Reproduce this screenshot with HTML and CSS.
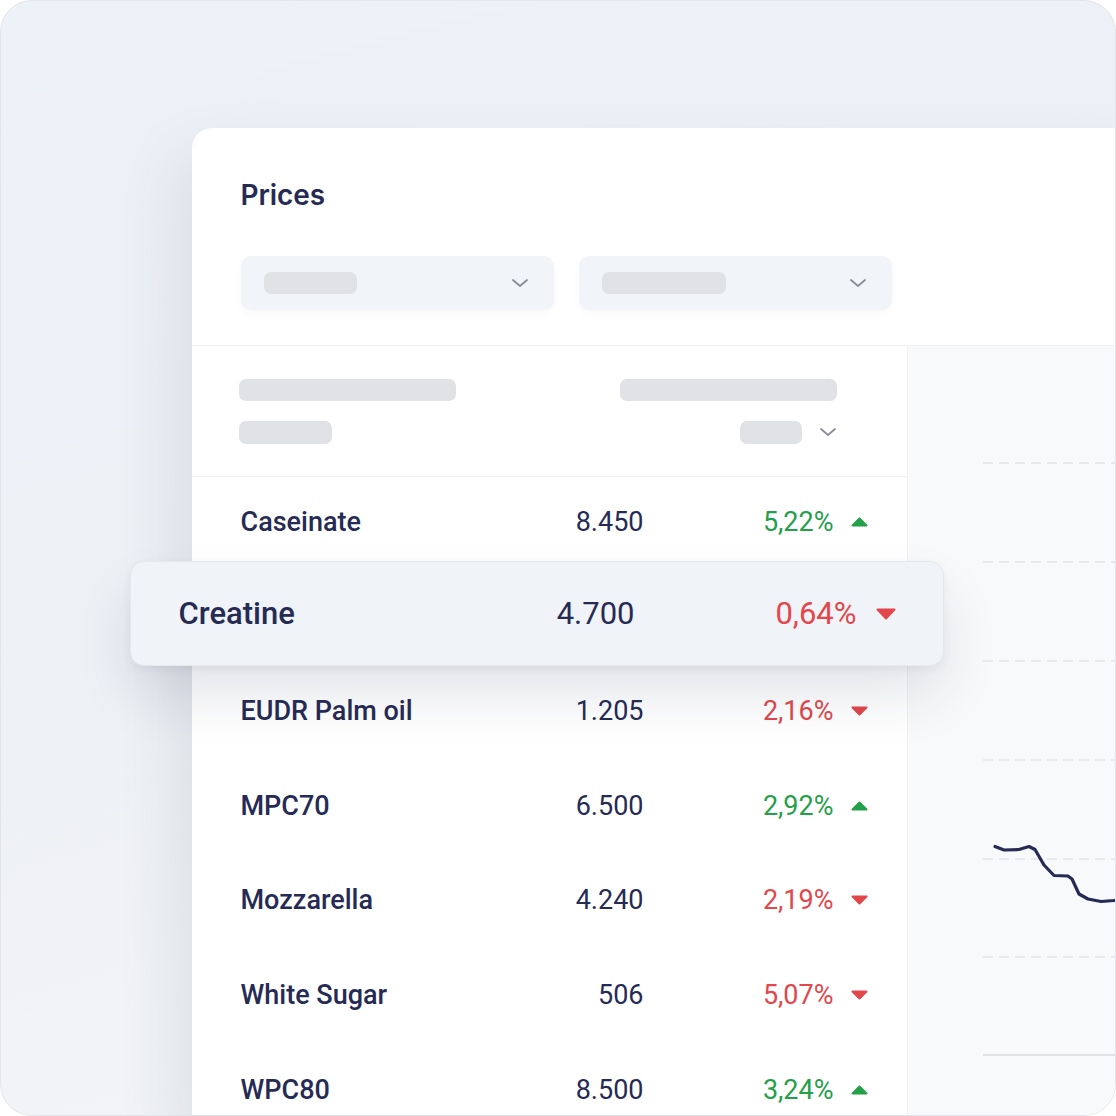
FILE: index.html
```html
<!DOCTYPE html>
<html lang="en">
<head>
    <meta charset="UTF-8">
    <meta name="viewport" content="width=device-width, initial-scale=1.0">
    <title>Prices</title>
    <link rel="stylesheet" href="styles.css">
</head>
<body>
<div class="frame">
    <div class="card">
        <div class="card-header">
            <h2 class="title">Prices</h2>
            <div class="filters">
                <div class="select">
                    <span class="skel skel-sm"></span>
                    <svg class="chevron" width="18" height="10" viewBox="0 0 18 10"><path d="M2 2 L9 8 L16 2"/></svg>
                </div>
                <div class="select">
                    <span class="skel skel-md"></span>
                    <svg class="chevron" width="18" height="10" viewBox="0 0 18 10"><path d="M2 2 L9 8 L16 2"/></svg>
                </div>
            </div>
        </div>

        <div class="card-body">
            <div class="table">
                <div class="table-head">
                    <div class="head-col">
                        <span class="skel skel-wide"></span>
                        <span class="skel skel-sm"></span>
                    </div>
                    <div class="head-col">
                        <span class="skel skel-wide"></span>
                        <div class="head-sort">
                            <span class="skel skel-xs"></span>
                            <svg class="chevron" width="18" height="10" viewBox="0 0 18 10"><path d="M2 2 L9 8 L16 2"/></svg>
                        </div>
                    </div>
                </div>

                <div class="row">
                    <span class="name">Caseinate</span>
                    <span class="price">8.450</span>
                    <span class="change up">5,22%</span>
                    <svg class="arrow" width="17" height="10" viewBox="0 0 17 10"><polygon class="up" points="8.5,1.5 15.5,8.5 1.5,8.5"/></svg>
                </div>

                <div class="row row-slot">
                    <div class="row row-active">
                        <span class="name">Creatine</span>
                        <span class="price">4.700</span>
                        <span class="change down">0,64%</span>
                        <svg class="arrow" width="20" height="12" viewBox="0 0 20 12"><polygon class="down" points="1.5,1.5 18.5,1.5 10,10.5"/></svg>
                    </div>
                </div>

                <div class="row">
                    <span class="name">EUDR Palm oil</span>
                    <span class="price">1.205</span>
                    <span class="change down">2,16%</span>
                    <svg class="arrow" width="17" height="10" viewBox="0 0 17 10"><polygon class="down" points="1.5,1.5 15.5,1.5 8.5,8.5"/></svg>
                </div>

                <div class="row">
                    <span class="name">MPC70</span>
                    <span class="price">6.500</span>
                    <span class="change up">2,92%</span>
                    <svg class="arrow" width="17" height="10" viewBox="0 0 17 10"><polygon class="up" points="8.5,1.5 15.5,8.5 1.5,8.5"/></svg>
                </div>

                <div class="row">
                    <span class="name">Mozzarella</span>
                    <span class="price">4.240</span>
                    <span class="change down">2,19%</span>
                    <svg class="arrow" width="17" height="10" viewBox="0 0 17 10"><polygon class="down" points="1.5,1.5 15.5,1.5 8.5,8.5"/></svg>
                </div>

                <div class="row">
                    <span class="name">White Sugar</span>
                    <span class="price">506</span>
                    <span class="change down">5,07%</span>
                    <svg class="arrow" width="17" height="10" viewBox="0 0 17 10"><polygon class="down" points="1.5,1.5 15.5,1.5 8.5,8.5"/></svg>
                </div>

                <div class="row">
                    <span class="name">WPC80</span>
                    <span class="price">8.500</span>
                    <span class="change up">3,24%</span>
                    <svg class="arrow" width="17" height="10" viewBox="0 0 17 10"><polygon class="up" points="8.5,1.5 15.5,8.5 1.5,8.5"/></svg>
                </div>
            </div>

            <div class="chart">
                <svg width="240" height="780" viewBox="0 0 240 780">
                    <g class="grid">
                        <line x1="75" y1="117" x2="240" y2="117"/>
                        <line x1="75" y1="216" x2="240" y2="216"/>
                        <line x1="75" y1="315" x2="240" y2="315"/>
                        <line x1="75" y1="414" x2="240" y2="414"/>
                        <line x1="75" y1="513" x2="240" y2="513"/>
                        <line x1="75" y1="611" x2="240" y2="611"/>
                    </g>
                    <line class="axis" x1="75" y1="709" x2="240" y2="709"/>
                    <polyline class="series" points="87,500.5 96,504 111,503.5 121,500.5 127,503.5 136,519 146,529.5 160,530 164,533 171,548 180,553 193,555.5 206,554.5 220,552"/>
                </svg>
            </div>
        </div>
    </div>
</div>
</body>
</html>
```

FILE: styles.css
```css
body {
    margin: 0;
    background: #ffffff;
}

.frame {
    width: 1116px;
    height: 1116px;
    box-sizing: border-box;
    border: 1.5px solid #e2e5e9;
    border-radius: 32px;
    overflow: hidden;
    padding: 126.5px 0 0 190.5px;
    background: linear-gradient(165deg, #edf1f8 0%, #edf0f5 45%, #f1f3f6 75%, #f3f4f7 100%);
}

.card {
    width: 960px;
    background: #ffffff;
    border-top-left-radius: 20px;
    box-shadow: -18px 24px 60px rgba(40, 50, 80, 0.09);
    font-family: Roboto, "Liberation Sans", sans-serif;
    color: #262b55;
}

/* header with title and the two filter selects */
.card-header {
    padding: 51px 0 35px 49px;
    border-bottom: 1px solid #eef0f3;
}

.title {
    margin: 0 0 45px;
    font-family: Inter, "Noto Sans", sans-serif;
    font-size: 28px;
    line-height: 32px;
    font-weight: 600;
    letter-spacing: -0.1px;
    color: #262b55;
}

.filters {
    display: flex;
    gap: 25px;
}

.select {
    width: 313px;
    height: 54px;
    box-sizing: border-box;
    padding: 0 25px 0 23px;
    display: flex;
    align-items: center;
    justify-content: space-between;
    background: #f1f4f8;
    border-radius: 10px;
    box-shadow: 0 3px 8px rgba(30, 40, 70, 0.03);
}

.skel {
    display: block;
    height: 22px;
    border-radius: 7px;
    background: #e0e2e5;
}

.skel-sm { width: 93px; }
.skel-md { width: 124px; }
.skel-wide { width: 217px; }
.skel-xs { width: 62px; }

.chevron path {
    fill: none;
    stroke: #8c8a98;
    stroke-width: 1.8;
    stroke-linecap: round;
    stroke-linejoin: round;
}

/* table and chart side by side */
.card-body {
    display: grid;
    grid-template-columns: 715px 1fr;
}

.table-head {
    height: 131px;
    box-sizing: border-box;
    padding: 33px 70px 0 47px;
    display: flex;
    justify-content: space-between;
    border-bottom: 1px solid #eef0f3;
}

.head-col {
    display: flex;
    flex-direction: column;
    gap: 20px;
}

.head-col .skel + .skel {
    height: 23px;
}

.head-sort {
    display: flex;
    align-items: center;
    justify-content: flex-end;
    gap: 17px;
}

.head-sort .skel {
    height: 23px;
}

.row {
    height: 94.67px;
    box-sizing: border-box;
    padding: 0 39px 4px 49px;
    display: flex;
    align-items: center;
    font-size: 27px;
    line-height: 32px;
}

.name {
    flex: 1;
    font-weight: 500;
}

.price {
    width: 120px;
    text-align: right;
}

.change {
    width: 190px;
    text-align: right;
}

.arrow {
    margin-left: 17px;
    flex-shrink: 0;
}

.up { color: #23a049; fill: #23a049; }
.down { color: #e2474b; fill: #e2474b; }

.arrow polygon {
    stroke-width: 2;
    stroke-linejoin: round;
}

.arrow .up { stroke: #23a049; }
.arrow .down { stroke: #e2474b; }

/* the highlighted row lifts out of the table */
.row-slot {
    padding: 0;
    display: flow-root;
    position: relative;
    z-index: 2;
}

.row-active {
    height: 105px;
    margin: -10px -37px 0 -62px;
    padding: 0 47px 0 48px;
    font-size: 31px;
    background: #f0f3f7;
    border: 1px solid #e5e9ee;
    border-radius: 14px;
    box-shadow: 0 30px 60px -6px rgba(30, 40, 70, 0.14), 0 4px 10px rgba(30, 40, 70, 0.05);
}

.row-active .price {
    width: 140px;
}

.row-active .change {
    width: 222px;
}

.row-active .arrow {
    margin-left: 19px;
}

.chart {
    background: #f8f9fa;
    border-left: 1px solid #eef0f2;
    overflow: hidden;
}

.chart svg {
    display: block;
}

.grid line {
    stroke: #e1e3e7;
    stroke-width: 1.5;
    stroke-dasharray: 10 6;
}

.axis {
    stroke: #d8dadf;
    stroke-width: 1.5;
}

.series {
    fill: none;
    stroke: #262b55;
    stroke-width: 3.2;
    stroke-linejoin: round;
    stroke-linecap: round;
}
```
